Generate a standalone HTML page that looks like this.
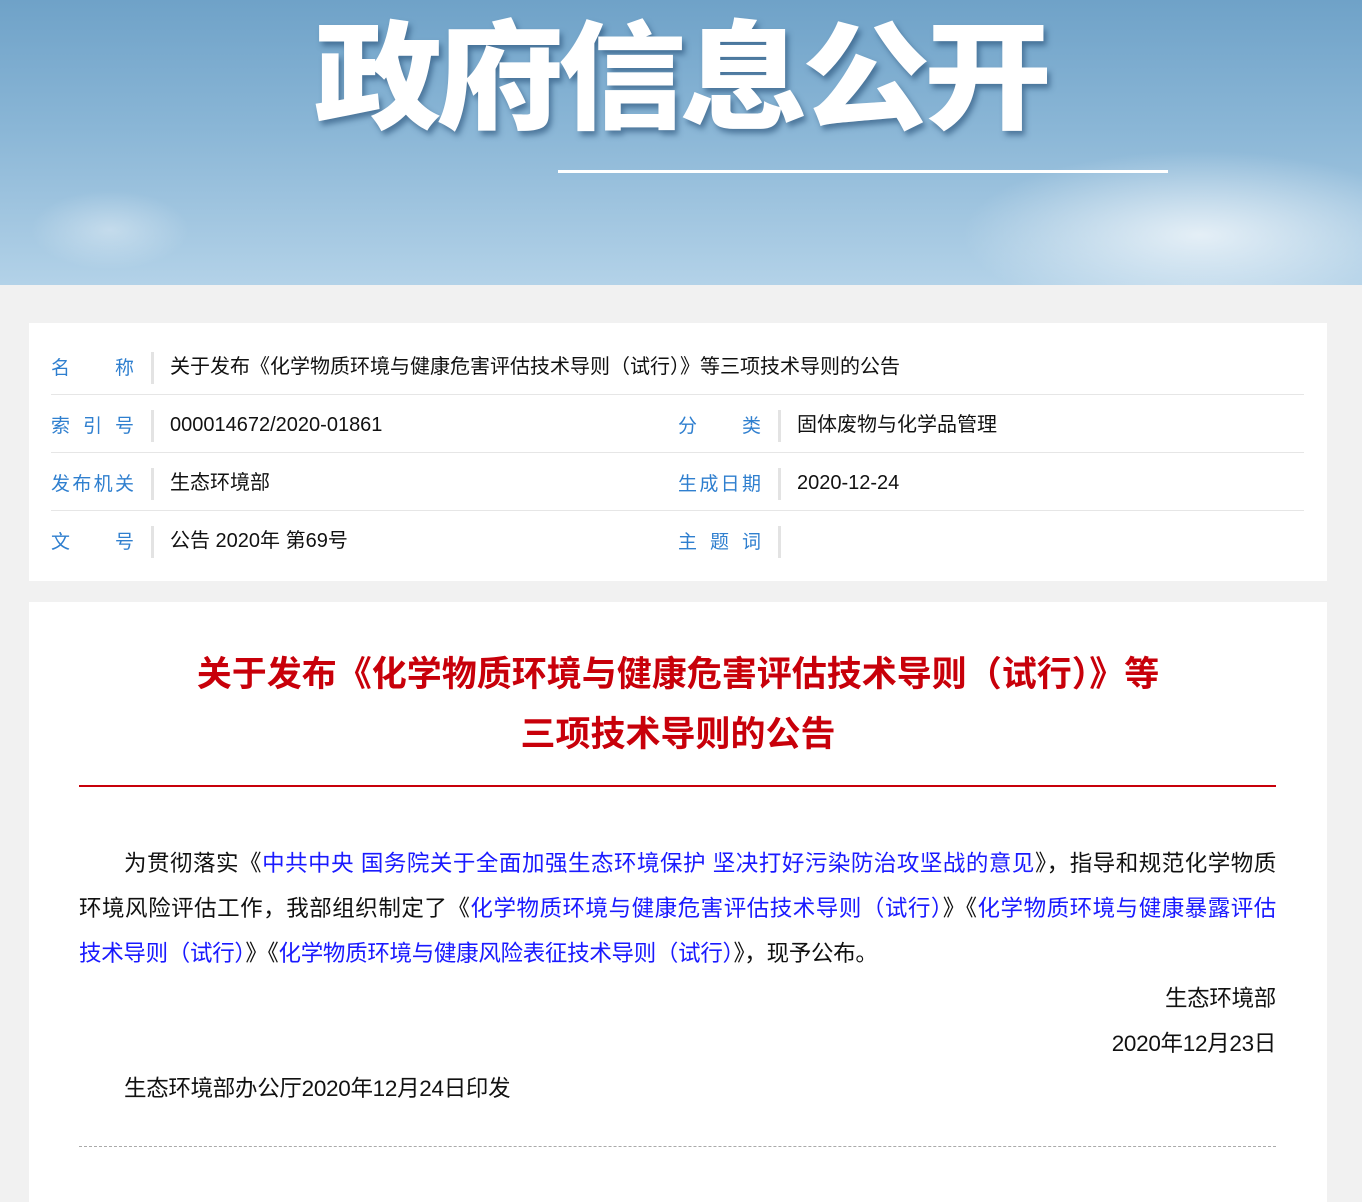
<!DOCTYPE html>
<html><head><meta charset="utf-8"><style>
*{margin:0;padding:0;box-sizing:border-box}
body{width:1362px;height:1162px;overflow:hidden;background:#f1f1f1;font-family:"Liberation Sans","Microsoft YaHei","Noto Sans CJK SC",sans-serif;position:relative}
.hdr{position:absolute;left:0;top:0;width:1362px;height:285px;background:linear-gradient(180deg,#6fa2c8 0%,#8ab6d6 45%,#b3d2e8 100%);overflow:hidden}
.cloud{position:absolute;border-radius:50%;background:radial-gradient(ellipse at center,rgba(255,255,255,.7),rgba(255,255,255,0) 70%)}
.htitle{position:absolute;left:300px;top:0px;width:760px;text-align:center;font-family:"Noto Sans CJK SC",sans-serif;font-weight:900;font-size:128px;line-height:150px;color:#fff;letter-spacing:-6px;transform:scaleY(0.92);transform-origin:top;text-shadow:3px 5px 6px rgba(30,70,110,.55)}
.hline{position:absolute;left:558px;top:170px;width:610px;height:3px;background:#fff}
.box{position:absolute;left:29px;background:#fff;width:1298px}
.info{top:323px;height:258px}
.row{position:absolute;left:22px;width:1253px;height:58px;font-size:20px}
.row.b{border-bottom:1px solid #e6e6e6}
.lab{position:absolute;top:3px;height:58px;line-height:58px;color:#2f7fcf;width:83px;text-align:justify;text-align-last:justify;font-size:19px}
.bar{position:absolute;top:15px;width:3px;height:32px;background:#e3e3e3}
.val{position:absolute;top:2px;line-height:56px;color:#111}
.art{top:602px;height:600px}
.t{position:absolute;left:0;width:1298px;text-align:center;color:#c8000a;font-weight:bold;font-size:35px;line-height:60px;font-family:"Noto Sans CJK SC",sans-serif}
.red{position:absolute;left:50px;top:183px;width:1197px;height:2px;background:#c8000a}
.p{position:absolute;left:50px;width:1197px;font-size:22.5px;line-height:45px;color:#111;white-space:nowrap;letter-spacing:-0.3px}
.j{text-align:justify;text-align-last:justify}
a{color:#1a1aff;text-decoration:none}
.dash{position:absolute;left:50px;top:544px;width:1197px;border-top:1px dashed #aaa}
</style></head><body>
<div class="hdr">
<div class="cloud" style="left:960px;top:150px;width:480px;height:170px"></div>
<div class="cloud" style="left:30px;top:190px;width:160px;height:80px;opacity:.5"></div>
<div class="htitle">政府信息公开</div>
<div class="hline"></div>
</div>
<div class="box info">
<div class="row b" style="top:14px"><div class="lab" style="left:0">名 称</div><div class="bar" style="left:100px"></div><div class="val" style="left:119px">关于发布《化学物质环境与健康危害评估技术导则（试行）》等三项技术导则的公告</div></div>
<div class="row b" style="top:72px"><div class="lab" style="left:0">索 引 号</div><div class="bar" style="left:100px"></div><div class="val" style="left:119px">000014672/2020-01861</div>
<div class="lab" style="left:627px">分 类</div><div class="bar" style="left:727px"></div><div class="val" style="left:746px">固体废物与化学品管理</div></div>
<div class="row b" style="top:130px"><div class="lab" style="left:0">发布机关</div><div class="bar" style="left:100px"></div><div class="val" style="left:119px">生态环境部</div>
<div class="lab" style="left:627px">生成日期</div><div class="bar" style="left:727px"></div><div class="val" style="left:746px">2020-12-24</div></div>
<div class="row" style="top:188px"><div class="lab" style="left:0">文 号</div><div class="bar" style="left:100px"></div><div class="val" style="left:119px">公告 2020年 第69号</div>
<div class="lab" style="left:627px">主 题 词</div><div class="bar" style="left:727px"></div></div>
</div>
<div class="box art">
<div class="t" style="top:40px">关于发布《化学物质环境与健康危害评估技术导则（试行）》等</div>
<div class="t" style="top:100px">三项技术导则的公告</div>
<div class="red"></div>
<div class="p j" style="top:239px;padding-left:45px">为贯彻落实《<a>中共中央 国务院关于全面加强生态环境保护 坚决打好污染防治攻坚战的意见</a>》，指导和规范化学物质</div>
<div class="p j" style="top:284px">环境风险评估工作，我部组织制定了《<a>化学物质环境与健康危害评估技术导则（试行）</a>》《<a>化学物质环境与健康暴露评估</a></div>
<div class="p" style="top:329px"><a>技术导则（试行）</a>》《<a>化学物质环境与健康风险表征技术导则（试行）</a>》，现予公布。</div>
<div class="p" style="top:374px;text-align:right">生态环境部</div>
<div class="p" style="top:419px;text-align:right">2020年12月23日</div>
<div class="p" style="top:464px;padding-left:45px">生态环境部办公厅2020年12月24日印发</div>
<div class="dash"></div>
</div>
</body></html>
